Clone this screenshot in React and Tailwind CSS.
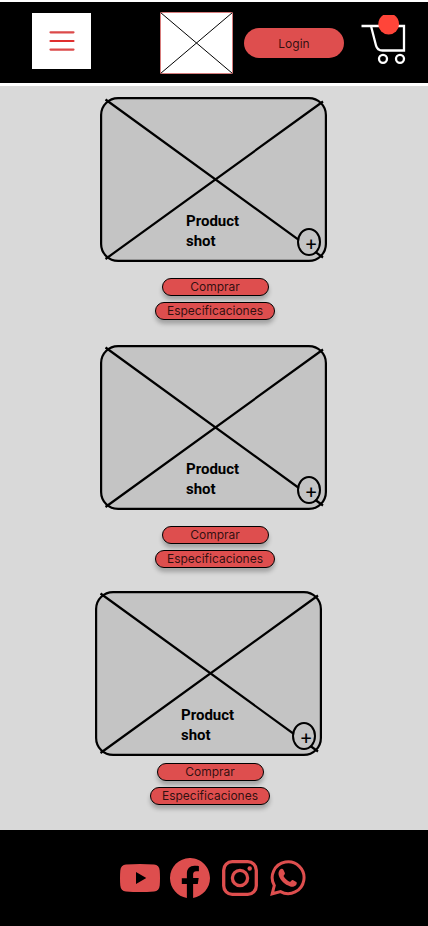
import { BsFacebook } from "react-icons/bs";

function ProductCard() {
  return (
    <div className="relative h-[165px] w-[227px]">
      <svg viewBox="0 0 227 165" className="block h-full w-full overflow-visible" fill="none" stroke="black" strokeWidth="2.2" aria-hidden="true">
        <rect x="1.1" y="1.1" width="224.8" height="162.8" rx="17" fill="#c4c4c4" />
        <path d="M5.5 2.5L223 160.5M5.5 162L223 4.5" />
      </svg>
      <p className="absolute left-[86px] top-[114px] w-16 font-['Roboto',sans-serif] text-[15px] font-bold leading-5 text-black">
        Product shot
      </p>
      <button
        type="button"
        aria-label="Ampliar producto"
        className="absolute left-[197px] top-[131px] flex h-7 w-6 items-center justify-center rounded-[50%] border-2 border-black bg-[#c4c4c4] pl-1 pt-0.5 font-['Inter',sans-serif] text-xl leading-none text-black"
      >
        +
      </button>
    </div>
  );
}

const pill =
  "flex h-[18px] items-center justify-center rounded-full border border-black bg-[#de4e4e] font-['Inter',sans-serif] text-xs text-black/80 shadow-[0_4px_4px_rgba(0,0,0,0.25)]";

function Product({ className = "", gap = "gap-4" }) {
  return (
    <article className={`flex flex-col items-center ${gap} ${className}`}>
      <ProductCard />
      <div className="flex flex-col items-center gap-1.5 pl-[3px]">
        <button type="button" className={`${pill} w-[107px]`}>Comprar</button>
        <button type="button" className={`${pill} w-[120px]`}>Especificaciones</button>
      </div>
    </article>
  );
}

function Header() {
  return (
    <header className="border-b-[3px] border-t-2 border-white bg-black">
      <div className="flex h-[81px] items-center justify-between pl-8 pr-[22px]">
        <button type="button" aria-label="Menú" className="mb-1 flex h-14 w-[59px] items-center justify-center bg-white">
          <svg width="26" height="22" viewBox="0 0 26 22" stroke="#dc4a4a" strokeWidth="2.2" strokeLinecap="round" aria-hidden="true">
            <path d="M1.5 2.3H24.5M1.5 19.6H24.5" />
            <path d="M1.5 11H24.5" stroke="#e02f2f" />
          </svg>
        </button>
        <div className="flex items-center">
          <svg width="73" height="62" viewBox="0 0 73 62" fill="none" role="img" aria-label="Logo">
            <rect x="0.5" y="0.5" width="72" height="61" fill="white" stroke="#d77c7c" />
            <path d="M0.5 0.5L72.5 61.5M0.5 61.5L72.5 0.5" stroke="black" />
          </svg>
          <button type="button" className="ml-[11px] h-[30px] w-[100px] rounded-full bg-[#de4e4e] pt-0.5 font-['Inter',sans-serif] text-xs text-black/80">
            Login
          </button>
          <button type="button" aria-label="Carrito" className="mb-2 ml-[17px]">
            <svg width="45" height="50" viewBox="0 0 45 50" fill="none" stroke="white" strokeWidth="2.3" aria-hidden="true">
              <path d="M0.5 12H43V36.5H21.5C18 36.5 15.8 34.5 15 31.5L10 12" />
              <circle cx="22" cy="44.8" r="4" />
              <circle cx="39" cy="44.8" r="4" />
              <path d="M17.3 10.2C17.3 6.3 19.2 2.8 22.2 1H33.2C36.2 2.8 38 6.3 38 10.2A10.35 10.35 0 0 1 17.3 10.2Z" fill="#ff4539" stroke="none" />
            </svg>
          </button>
        </div>
      </div>
    </header>
  );
}

function InstagramIcon() {
  return (
    <svg width="36" height="36" viewBox="0 0 36 36" fill="none" stroke="currentColor" strokeWidth="3.3" aria-hidden="true">
      <rect x="1.7" y="1.7" width="32.6" height="32.6" rx="8.5" />
      <circle cx="18" cy="18" r="7.6" />
      <circle cx="27.7" cy="8.5" r="2.2" fill="currentColor" stroke="none" />
    </svg>
  );
}

function WhatsappIcon() {
  return (
    <svg width="36" height="36" viewBox="0 0 36 36" fill="none" aria-hidden="true">
      <path d="M2.2 33.8L4.3 25.5A15.9 15.9 0 1 1 10.5 31.6Z" stroke="currentColor" strokeWidth="3" strokeLinejoin="miter" />
      <path d="M10.1 9.4C11.4 8.5 12.9 8.7 13.5 9.9L14.9 13.1C15.2 14 14.1 15.3 13.5 16C15 18.8 17.3 20.8 20.2 22C20.9 21.3 21.9 19.8 22.8 20.1L26.3 21.9C27.1 22.4 26.8 24 26.1 24.9C24.8 26.5 22.4 27 20.3 26.4C14.6 24.9 10.6 20.9 8.8 15.6C8.1 13.2 8.6 10.8 10.1 9.4Z" fill="currentColor" />
    </svg>
  );
}

function Footer() {
  return (
    <footer className="flex h-24 items-center justify-center gap-2.5 bg-black pr-0.5 text-[#de4e4e]">
      <a href="#youtube" aria-label="YouTube">
        <svg width="40" height="40" viewBox="0 0 40 40" fill="currentColor" aria-hidden="true">
          <path fillRule="evenodd" d="M6 6.5Q20 5.5 34 6.5Q39.2 7 39.7 12.5Q40.3 20 39.7 27.5Q39.2 33 34 33.5Q20 34.5 6 33.5Q.8 33 .3 27.5Q-.3 20 .3 12.5Q.8 7 6 6.5ZM16 14V26L26.3 20Z" />
        </svg>
      </a>
      <a href="#facebook" aria-label="Facebook"><BsFacebook size={40} /></a>
      <a href="#instagram" aria-label="Instagram" className="flex w-10 justify-center"><InstagramIcon /></a>
      <a href="#whatsapp" aria-label="WhatsApp"><WhatsappIcon /></a>
    </footer>
  );
}

export default function App() {
  return (
    <div className="flex min-h-screen flex-col bg-[#d9d9d9]">
      <Header />
      <main className="grow pb-[25px] pr-px pt-[11px]">
        <Product />
        <Product className="mt-[25px]" />
        <Product className="mt-[23px] pr-2.5" gap="gap-[7px]" />
      </main>
      <Footer />
    </div>
  );
}
